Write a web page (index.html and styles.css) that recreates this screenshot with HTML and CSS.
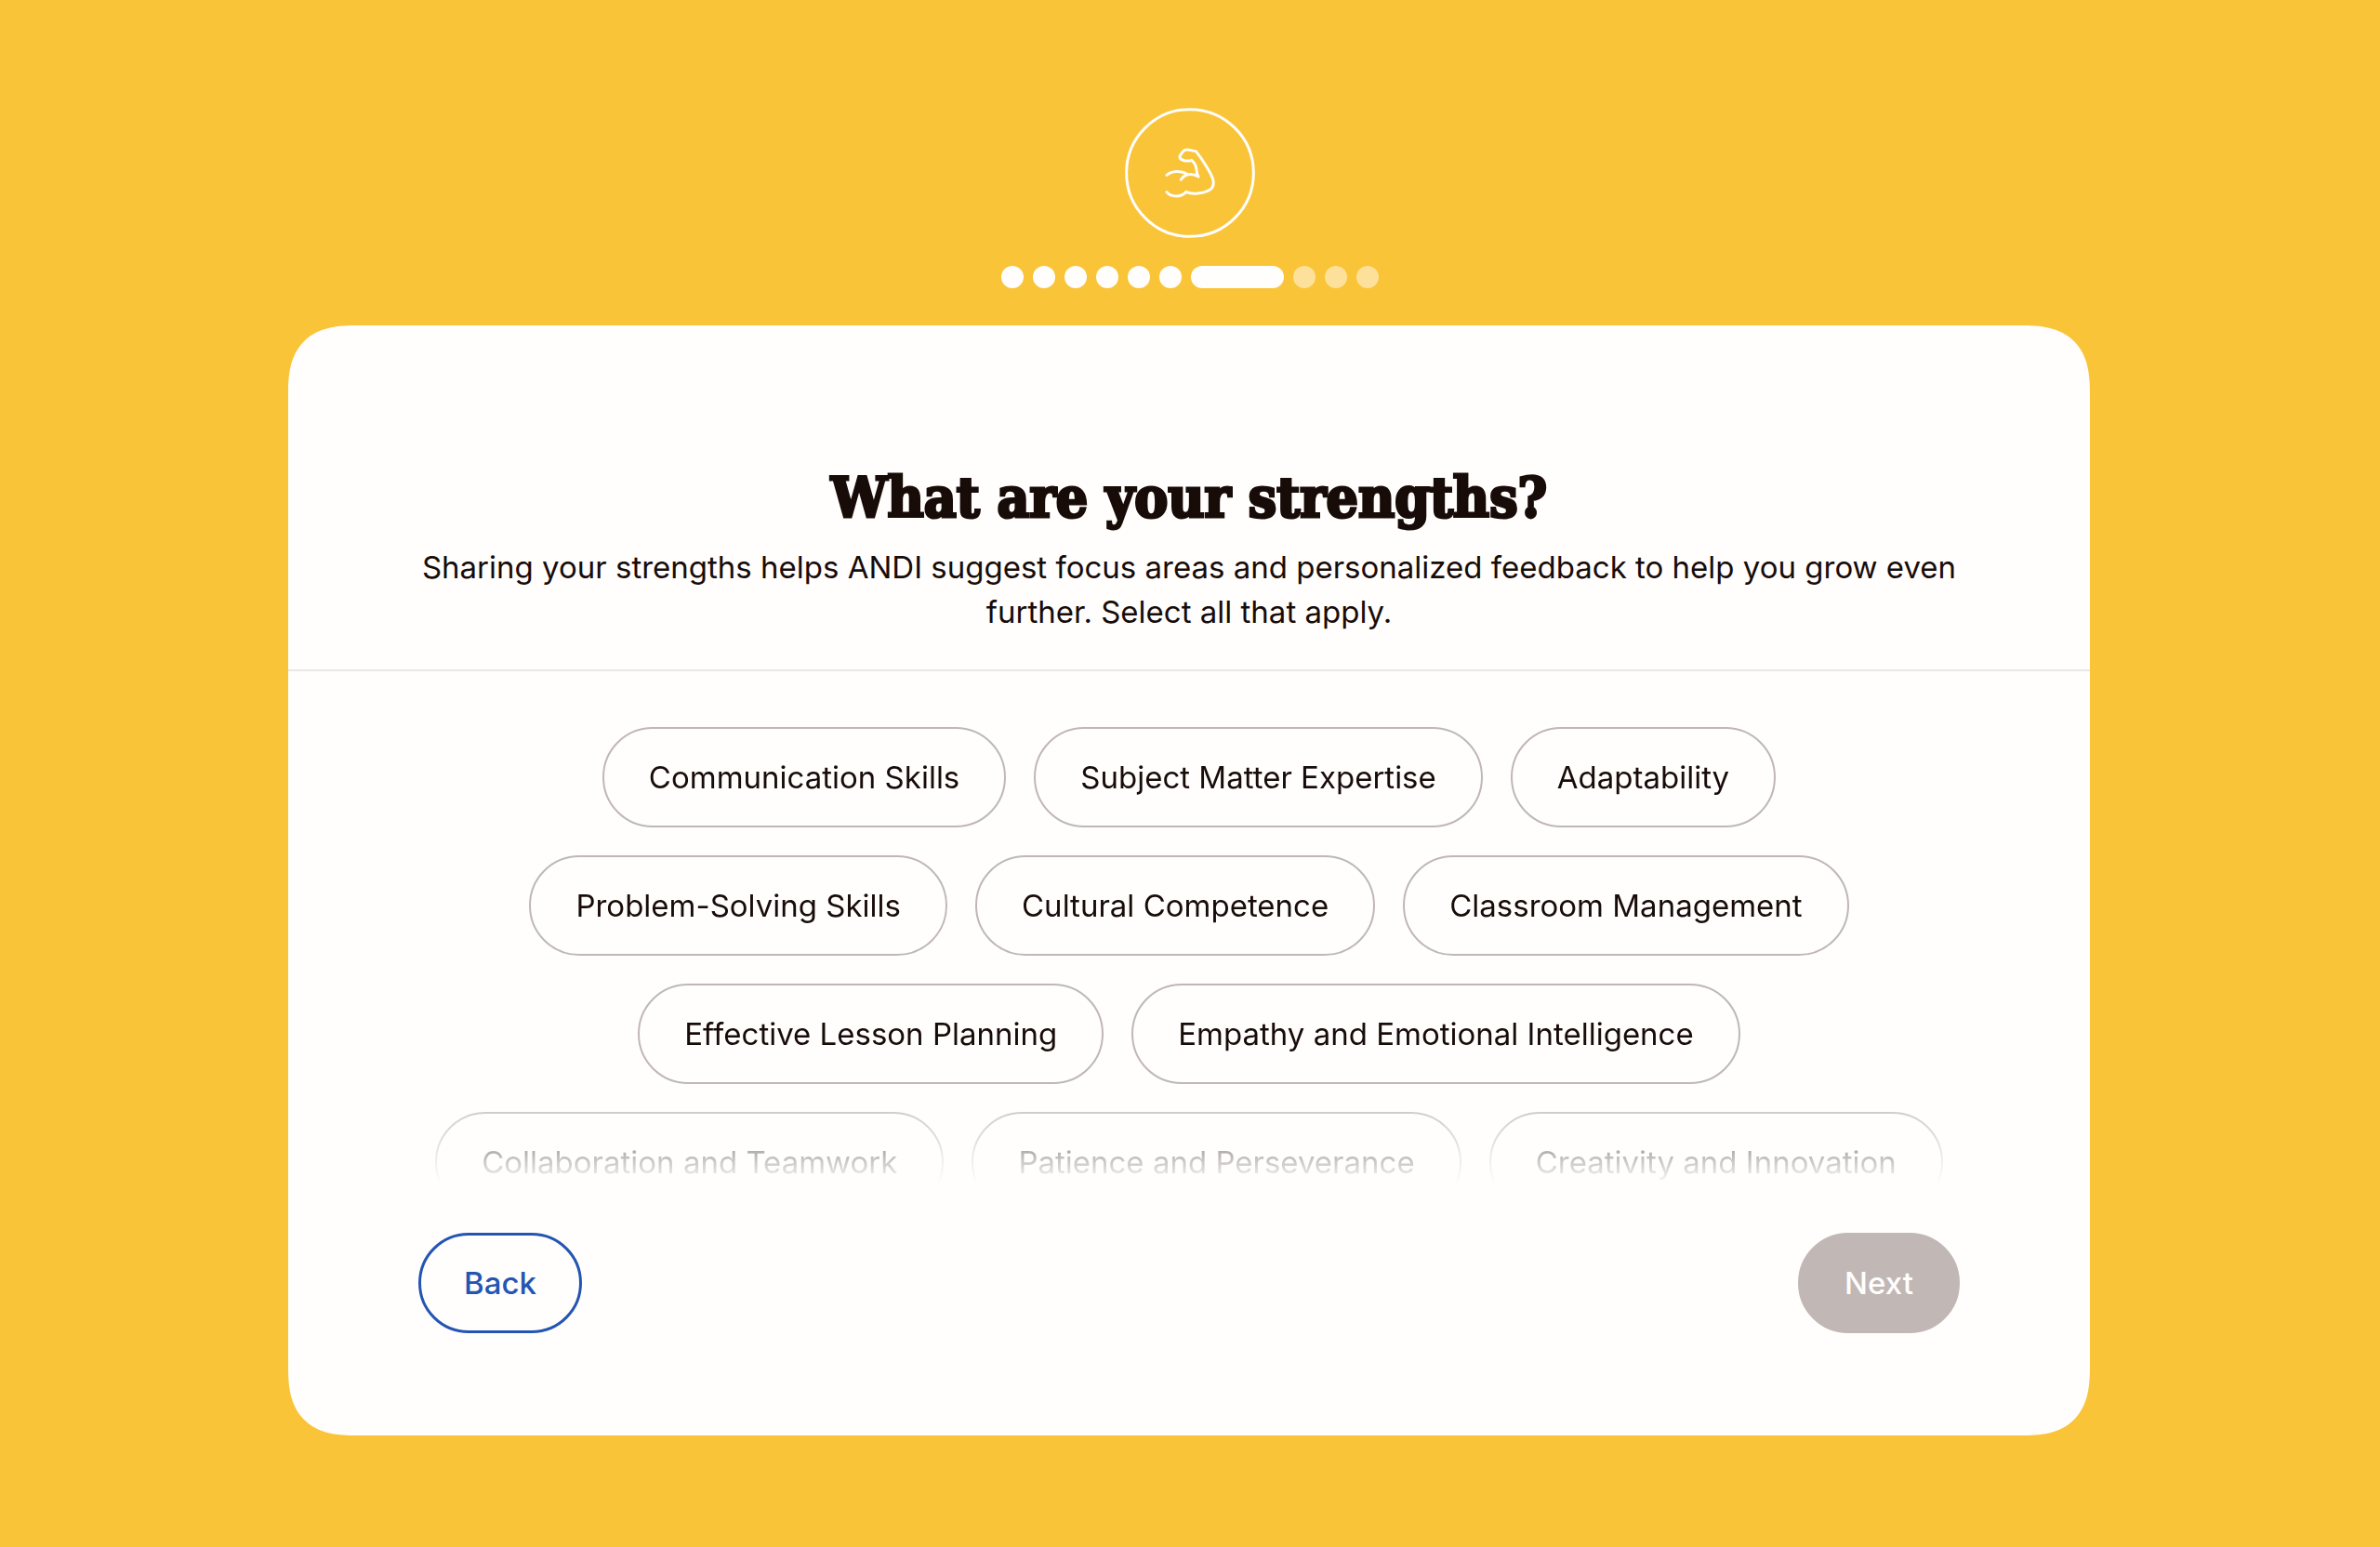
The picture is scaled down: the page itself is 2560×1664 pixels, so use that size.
FILE: index.html
```html
<!DOCTYPE html>
<html lang="en">
<head>
  <meta charset="utf-8">
  <meta name="viewport" content="width=device-width, initial-scale=1">
  <title>What are your strengths?</title>
  <link rel="stylesheet" href="styles.css">
</head>
<body>
  <header class="progress">
    <svg class="progress-icon" viewBox="33 33 420 420" aria-hidden="true">
      <circle cx="243" cy="243" r="205"/>
      <path d="M168 250C184 236 211 234 234 247"/>
      <path d="M214 265C225 247 247 242 270 255C265 247 264 242 264 232C263 218 256 209 248 202C234 207 211 203 210 192C210 185 221 173 227 169C236 164 248 173 262 173C279 194 311 242 317 264C322 284 317 295 300 301C285 308 252 315 231 304C215 323 182 322 168 305"/>
    </svg>
    <ol class="steps" aria-label="Step 7 of 10">
      <li class="step"></li>
      <li class="step"></li>
      <li class="step"></li>
      <li class="step"></li>
      <li class="step"></li>
      <li class="step"></li>
      <li class="step step-current" aria-current="step"></li>
      <li class="step step-upcoming"></li>
      <li class="step step-upcoming"></li>
      <li class="step step-upcoming"></li>
    </ol>
  </header>

  <main class="card">
    <div class="intro">
      <h1 class="title">What are your strengths?</h1>
      <p class="subtitle">Sharing your strengths helps ANDI suggest focus areas and personalized feedback to help you grow even further. Select all that apply.</p>
    </div>

    <div class="options" role="group" aria-label="Strengths">
      <button class="option" type="button" aria-pressed="false">Communication Skills</button>
      <button class="option" type="button" aria-pressed="false">Subject Matter Expertise</button>
      <button class="option" type="button" aria-pressed="false">Adaptability</button>
      <button class="option" type="button" aria-pressed="false">Problem-Solving Skills</button>
      <button class="option" type="button" aria-pressed="false">Cultural Competence</button>
      <button class="option" type="button" aria-pressed="false">Classroom Management</button>
      <button class="option" type="button" aria-pressed="false">Effective Lesson Planning</button>
      <button class="option" type="button" aria-pressed="false">Empathy and Emotional Intelligence</button>
      <button class="option" type="button" aria-pressed="false">Collaboration and Teamwork</button>
      <button class="option" type="button" aria-pressed="false">Patience and Perseverance</button>
      <button class="option" type="button" aria-pressed="false">Creativity and Innovation</button>
    </div>

    <footer class="actions">
      <button class="action action-back" type="button">Back</button>
      <button class="action action-next" type="button" disabled>Next</button>
    </footer>
  </main>
</body>
</html>
```
FILE: styles.css
```css
:root {
  --yellow: #fac438;
  --paper: #fffefd;
  --ink: #180c09;
  --taupe: #c1b7b5;
  --blue: #2455b3;
  --rule: #e9e8e8;
}

* {
  box-sizing: border-box;
}

body {
  margin: 0;
  height: 100vh;
  min-height: 1100px;
  padding: 116px 0 120px;
  display: flex;
  flex-direction: column;
  gap: 40px;
  background: var(--yellow);
  color: var(--ink);
  font-family: Inter, "Liberation Sans", sans-serif;
  font-size: 33px;
  line-height: 48px;
}

/* Progress */

.progress {
  display: flex;
  flex-direction: column;
  align-items: center;
  gap: 30px;
}

.progress-icon {
  width: 140px;
  height: 140px;
  fill: none;
  stroke: var(--paper);
  stroke-width: 9;
  stroke-linecap: round;
  stroke-linejoin: round;
}

.steps {
  display: flex;
  gap: 10px;
  margin: 0;
  padding: 0;
  list-style: none;
}

.step {
  width: 24px;
  height: 24px;
  border-radius: 12px;
  background: var(--paper);
}

.step-current {
  width: 100px;
}

.step-upcoming {
  opacity: 0.5;
}

/* Card */

.card {
  flex: 1;
  min-height: 0;
  margin: 0 312px 0 310px;
  display: flex;
  flex-direction: column;
  background: var(--paper);
  border-radius: 74px;
  corner-shape: superellipse(1.4);
}

.intro {
  display: flex;
  flex-direction: column;
  gap: 15px;
  padding: 149px 140px 38px;
  border-bottom: 2px solid var(--rule);
  text-align: center;
}

.title {
  margin: 0;
  font-family: "DejaVu Serif Condensed", "DejaVu Serif", serif;
  font-size: 60px;
  font-stretch: condensed;
  font-weight: 700;
  line-height: 72px;
  -webkit-text-stroke: 3px var(--ink);
}

.subtitle {
  margin: 0;
}

/* Options scroll under a fade at the lower edge */

.options {
  flex: 1;
  min-height: 0;
  display: flex;
  flex-wrap: wrap;
  justify-content: center;
  align-content: flex-start;
  gap: 30px;
  padding: 60px 140px;
  overflow-y: auto;
  scrollbar-width: none;
  mask-image: linear-gradient(to top, transparent, #000 110px);
}

button {
  font: inherit;
  cursor: pointer;
}

.option {
  padding: 28px 48px;
  border: 2px solid var(--taupe);
  border-radius: 54px;
  background: none;
  color: inherit;
}

.actions {
  display: flex;
  justify-content: space-between;
  padding: 52px 140px 110px;
}

.action {
  min-width: 174px;
  padding: 27px 46px;
  border: 3px solid;
  border-radius: 54px;
  font-weight: 500;
}

.action-back {
  border-color: var(--blue);
  background: none;
  color: var(--blue);
}

.action-next {
  border-color: var(--taupe);
  background: var(--taupe);
  color: var(--paper);
  cursor: default;
}
```
